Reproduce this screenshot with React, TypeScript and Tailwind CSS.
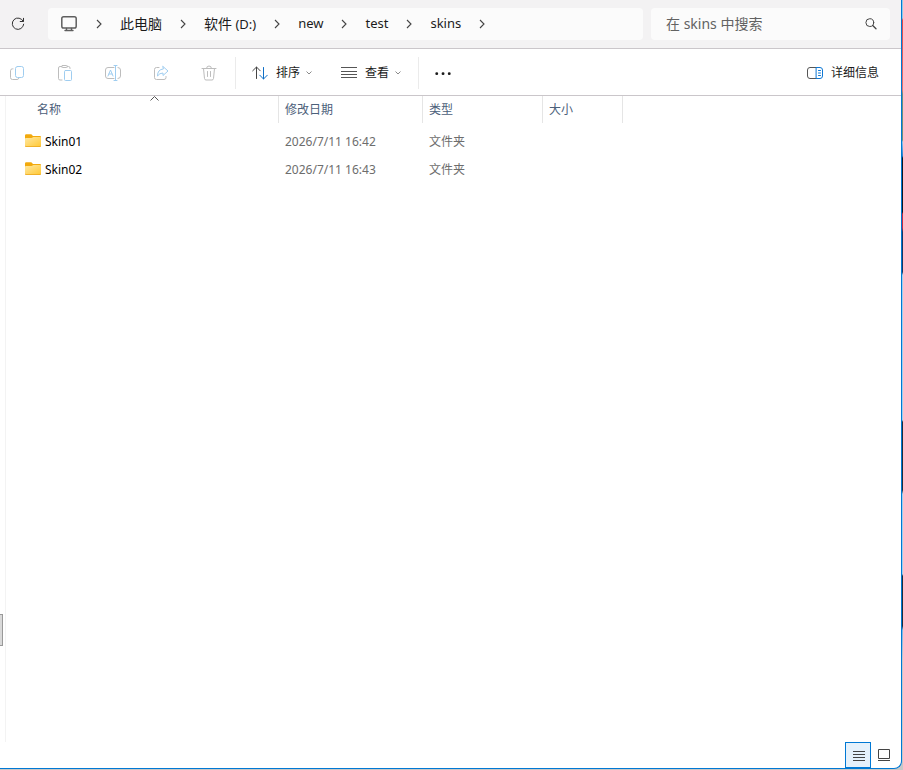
import type { ReactNode } from 'react';

interface FolderItem {
  name: string;
  modified: string;
  type: string;
}

const folders: FolderItem[] = [
  { name: 'Skin01', modified: '2026/7/11 16:42', type: '文件夹' },
  { name: 'Skin02', modified: '2026/7/11 16:43', type: '文件夹' },
];

interface IconProps {
  children: ReactNode;
  className?: string;
}

const Icon = ({ children, className = '' }: IconProps) => (
  <svg
    className={`shrink-0 ${className}`}
    width="16"
    height="16"
    viewBox="0 0 16 16"
    fill="none"
    stroke="currentColor"
    strokeLinecap="round"
    strokeLinejoin="round"
    aria-hidden="true"
  >
    {children}
  </svg>
);

const CrumbArrow = () => (
  <svg width="22" height="12" viewBox="0 0 22 12" fill="none" stroke="#444" strokeWidth="1.1" aria-hidden="true">
    <path d="M9 2l4 4-4 4" />
  </svg>
);

const DownArrow = () => (
  <svg width="6" height="4" viewBox="0 0 6 4" fill="none" stroke="#8a8a8a" aria-hidden="true">
    <path d="M.5.5L3 3 5.500.5" />
  </svg>
);

const FolderIcon = () => (
  <svg className="mb-0.5 shrink-0" width="16" height="14" viewBox="0 0 16 14" aria-hidden="true">
    <defs>
      <linearGradient id="folder" x1="0" y1="0" x2="1" y2="1">
        <stop offset="0" stopColor="#ffe8a3" />
        <stop offset="1" stopColor="#ffc937" />
      </linearGradient>
    </defs>
    <path d="M0 1.500Q0 .3 1.200.3H6.300L8 2H15Q16 2 16 3V6H0Z" fill="#f2a90c" />
    <path d="M0 4.700Q0 4 1 4H6.500L8.500 3H15.300Q16 3 16 3.700V12Q16 13 15 13H1Q0 13 0 12Z" fill="#eba61b" />
    <path d="M0 4.700Q0 4 1 4H6.500L8.500 3H15.300Q16 3 16 3.700V11.300Q16 12.200 15 12.200H1Q0 12.200 0 11.300Z" fill="url(#folder)" />
  </svg>
);

const AddressBar = () => (
  <header className="flex h-[49px] shrink-0 items-center border-b border-[#cac6ca] bg-[#f3f2f3] pr-[11px] pl-2.5">
    <button type="button" aria-label="刷新" className="mr-[22px] text-[#333]">
      <Icon>
        <path d="M13.200 5.300A5.700 5.700 0 1 0 13.700 8.200" />
        <path d="M13.500 2.300v3.200h-3.300" />
      </Icon>
    </button>
    <nav
      aria-label="地址栏"
      className="mr-2 flex h-8 min-w-0 flex-1 items-center rounded bg-[#fbfbfb] pl-[13px] text-[13px] text-[#1b1b1b]"
    >
      <button type="button" aria-label="位置" className="mr-[11px] text-[#5f5f5f]">
        <Icon>
          <rect x=".8" y=".8" width="14.400" height="11.200" rx="1.800" strokeWidth="1.500" />
          <path d="M5.500 12.500v2M10.500 12.500v2M4 14.500h8" strokeWidth="1.400" />
        </Icon>
      </button>
      <CrumbArrow />
      <button type="button" className="px-2.5 text-sm">此电脑</button>
      <CrumbArrow />
      <button type="button" className="px-2.5">
        <span className="text-sm">软件</span> (D:)
      </button>
      <CrumbArrow />
      <button type="button" className="px-2.5">new</button>
      <CrumbArrow />
      <button type="button" className="px-2.5">test</button>
      <CrumbArrow />
      <button type="button" className="px-2.5">skins</button>
      <CrumbArrow />
    </nav>
    <label className="flex h-8 w-[239px] items-center rounded bg-[#fbfbfb] pr-[11px] pl-[15px]">
      <input
        type="search"
        aria-label="搜索"
        placeholder="在 skins 中搜索"
        className="min-w-0 flex-1 bg-transparent text-sm placeholder:text-[#626262] focus:outline-none"
      />
      <Icon className="text-[#444]">
        <circle cx="6.800" cy="6.600" r="3.900" />
        <path d="M9.700 9.500L13 12.800" strokeWidth="1.300" />
      </Icon>
    </label>
  </header>
);

interface ToolButtonProps {
  label: string;
  children: ReactNode;
}

const ToolButton = ({ label, children }: ToolButtonProps) => (
  <button type="button" aria-label={label} disabled className="flex h-8 w-8 items-center justify-center text-[#bdbdbd]">
    <Icon>{children}</Icon>
  </button>
);

const Toolbar = () => (
  <div className="flex h-[47px] shrink-0 items-center border-b border-[#cac6ca] pt-0.5 pr-[22px] pl-px text-xs text-[#1b1b1b]">
    <div className="flex gap-4">
      <ToolButton label="复制">
        <path d="M4 3.800H3.500Q1.500 3.800 1.500 5.800V12.500Q1.500 14.500 3.500 14.500H8Q9.700 14.500 10 13" />
        <rect x="6.500" y="1.500" width="8" height="11" rx="2" stroke="#9fcdf0" />
      </ToolButton>
      <ToolButton label="粘贴">
        <path d="M5 1.500H3Q1.500 1.500 1.500 3V13.500Q1.500 15 3 15H5M10 1.500H11.500Q13 1.500 13 3V3.500" />
        <rect x="4.500" y=".5" width="6" height="2" rx="1" />
        <rect x="7.500" y="5.500" width="7" height="10" rx="1" stroke="#9fcdf0" />
      </ToolButton>
      <ToolButton label="重命名">
        <path d="M9 2.500H3Q.5 2.500.5 5V11Q.5 13.500 3 13.500H9M13 2.500Q15.500 2.500 15.500 5V11Q15.500 13.500 13 13.500" />
        <path d="M3 11L5.500 5 8 11M4 9H7M10.500.5V15.500M9 .5H12M9 15.500H12" stroke="#9fcdf0" />
      </ToolButton>
      <ToolButton label="共享">
        <path d="M6 2.500H3.500Q1.500 2.500 1.500 4.500V12.500Q1.500 14.500 3.500 14.500H11Q13 14.500 13 12.500V11.500" />
        <path d="M10 1.500L15 6 10 10.500V8Q6.500 8 4.500 11Q4.500 4.500 10 4Z" stroke="#9fcdf0" />
      </ToolButton>
      <ToolButton label="删除">
        <path d="M1 3.500H15M5.500 3.500Q5.500 1 8 1Q10.500 1 10.500 3.500M2.500 3.500L3.500 13.500Q3.700 15 5 15H11Q12.300 15 12.500 13.500L13.500 3.500M6.500 6.500V11.500M9.500 6.500V11.500" />
      </ToolButton>
    </div>
    <div className="ml-2.5 h-8 w-px bg-[#ebebeb]" />
    <button type="button" className="ml-4 flex items-center">
      <Icon>
        <path d="M4.500 13.500V2M.7 5.800L4.500 2 8.200 5.800" stroke="#444" />
        <path d="M11.500 2.500V14M7.800 10.200L11.500 14 15.300 10.200" stroke="#0f6fc6" />
      </Icon>
      <span className="mr-1.5 ml-2">排序</span>
      <DownArrow />
    </button>
    <button type="button" className="ml-[29px] flex items-center">
      <Icon className="text-[#555]">
        <path d="M0 2.500H16M0 6.500H16M0 9.500H16M0 12.500H16" strokeLinecap="butt" />
      </Icon>
      <span className="mr-1.5 ml-2">查看</span>
      <DownArrow />
    </button>
    <div className="ml-[17px] h-8 w-px bg-[#ebebeb]" />
    <button type="button" aria-label="更多" className="ml-4">
      <Icon className="text-[#1b1b1b]">
        <path d="M1.700 8.700h.1M8 8.700h.1M14.200 8.700h.1" strokeWidth="2.800" />
      </Icon>
    </button>
    <button type="button" className="ml-auto flex items-center">
      <Icon>
        <path d="M9.500 2.500H3Q.5 2.500.5 5V11Q.5 13.500 3 13.500H9.500" stroke="#555" />
        <path d="M9.500 2.500H13Q15.500 2.500 15.500 5V11Q15.500 13.500 13 13.500H9.500ZM11.500 5.500H13.500M11.500 8H13.500M11.500 10.500H13.500" stroke="#0f78d4" />
      </Icon>
      <span className="ml-2">详细信息</span>
    </button>
  </div>
);

const HeadCell = ({ children }: { children: ReactNode }) => (
  <th scope="col" className="p-0 align-top font-normal">
    <div className="flex h-[27px] items-center border-r border-[#e5e5e5] pl-1.5">{children}</div>
  </th>
);

const FileTable = () => (
  <table className="w-[617px] table-fixed border-collapse text-left text-xs">
    <colgroup>
      <col className="w-[273px]" />
      <col className="w-36" />
      <col className="w-[120px]" />
      <col className="w-20" />
    </colgroup>
    <thead className="text-[#4c607a]">
      <tr className="h-8">
        <th scope="col" aria-sort="ascending" className="p-0 align-top font-normal">
          <div className="relative ml-6 flex h-[27px] items-center border-r border-[#e5e5e5] pl-[7px]">
            名称
            <svg
              className="absolute inset-x-0 top-0 mx-auto"
              width="9"
              height="5"
              viewBox="0 0 9 5"
              fill="none"
              stroke="#555"
              aria-hidden="true"
            >
              <path d="M.5 4.500l4-4 4 4" />
            </svg>
          </div>
        </th>
        <HeadCell>修改日期</HeadCell>
        <HeadCell>类型</HeadCell>
        <HeadCell>大小</HeadCell>
      </tr>
    </thead>
    <tbody className="text-[#6d6d6d]">
      {folders.map((folder) => (
        <tr key={folder.name} className="h-7">
          <td className="p-0 pl-[19px]">
            <div className="flex items-center gap-1 text-black">
              <FolderIcon />
              {folder.name}
            </div>
          </td>
          <td className="p-0 pl-1.5">{folder.modified}</td>
          <td className="p-0 pl-1.5">{folder.type}</td>
          <td className="p-0" />
        </tr>
      ))}
    </tbody>
  </table>
);

const App = () => (
  // The desktop shows as a thin strip behind the right and bottom window edges
  <div className="flex h-screen bg-[linear-gradient(180deg,#8ccbe8_0,#8ccbe8_18px,#e2484a_20px,#e8706e_90px,#6f8f7a_94px,#6f8f7a_140px,#8fc3ea_142px,#2a7fc9_156px,#101820_158px,#101820_212px,#c8283f_214px,#c8283f_228px,#17355f_232px,#17355f_272px,#9fd0ee_275px,#9fd0ee_420px,#1d2c3a_422px,#1d2c3a_490px,#9fd0ee_494px,#9fd0ee_574px,#1d2c3a_576px,#1d2c3a_626px,#79b8e4_630px,#c4c8cc_660px,#c8c8c8_100%)] pr-px pb-px font-['Noto_Sans','Noto_Sans_CJK_SC',sans-serif]">
    <div className="flex min-w-0 flex-1 flex-col overflow-hidden rounded-br-lg border-r border-b border-[#0078d4] bg-white">
      <AddressBar />
      <Toolbar />
      <main className="flex min-h-0 flex-1">
        <div className="flex w-[5px] shrink-0 flex-col justify-end">
          <div className="mb-24 h-8 w-[3px] border border-l-0 border-[#999] bg-[#d9d9d9]" />
        </div>
        <div className="min-w-0 flex-1 border-l border-[#f3f3f3]">
          <FileTable />
        </div>
      </main>
      <footer className="flex shrink-0 justify-end pr-1">
        <button
          type="button"
          aria-label="详细列表"
          aria-pressed="true"
          className="flex h-[26px] w-[26px] items-center justify-center border border-[#0078d4] bg-[#e5f1fb] pt-0.5 pl-0.5 text-[#444]"
        >
          <svg width="12" height="10" viewBox="0 0 12 10" stroke="currentColor" aria-hidden="true">
            <path d="M0 .5H12M0 3.500H12M0 6.500H12M0 9.500H12" />
          </svg>
        </button>
        <button
          type="button"
          aria-label="大缩略图"
          className="flex h-[26px] w-[26px] items-center justify-center text-[#444]"
        >
          <svg width="12" height="12" viewBox="0 0 12 12" fill="none" stroke="currentColor" aria-hidden="true">
            <path d="M.5.5H11.500V9.500H.5ZM0 11.500H12" />
          </svg>
        </button>
      </footer>
    </div>
  </div>
);

export default App;
